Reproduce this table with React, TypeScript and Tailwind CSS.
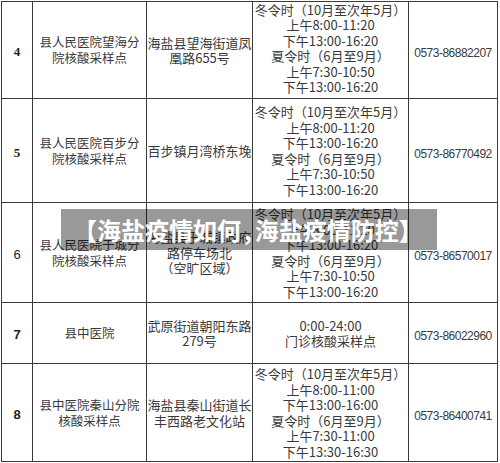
import React from "react";

const CJK = { fontFamily: '"Noto Sans CJK SC", "Noto Sans", sans-serif' };

type Row = {
  no: string;
  noClass: string;
  name: string[];
  addr: string[];
  time: string[];
  phone: string;
  timePad?: string;
};

const WINTER1 = [
  "冬令时（10月至次年5月）",
  "上午8:00-11:20",
  "下午13:00-16:20",
  "夏令时（6月至9月）",
  "上午7:30-10:50",
  "下午13:00-16:20",
];

const rows: Row[] = [
  {
    no: "4",
    noClass: "font-bold font-['Liberation_Serif',serif]",
    name: ["县人民医院望海分", "院核酸采样点"],
    addr: ["海盐县望海街道凤", "凰路655号"],
    time: WINTER1,
    phone: "0573-86882207",
    timePad: "pb-[4px]",
  },
  {
    no: "5",
    noClass: "font-bold font-['Liberation_Serif',serif]",
    name: ["县人民医院百步分", "院核酸采样点"],
    addr: ["百步镇月湾桥东堍"],
    time: WINTER1,
    phone: "0573-86770492",
  },
  {
    no: "6",
    noClass: "font-normal font-['Liberation_Sans',sans-serif]",
    name: ["县人民医院于城分", "院核酸采样点"],
    addr: ["海盐县于城镇政府", "路停车场北", "（空旷区域）"],
    time: WINTER1,
    phone: "0573-86570017",
  },
  {
    no: "7",
    noClass: "font-bold font-['Liberation_Sans',sans-serif]",
    name: ["县中医院"],
    addr: ["武原街道朝阳东路", "279号"],
    time: ["0:00-24:00", "门诊核酸采样点"],
    phone: "0573-86022960",
  },
  {
    no: "8",
    noClass: "font-bold font-['Liberation_Sans',sans-serif]",
    name: ["县中医院秦山分院", "核酸采样点"],
    addr: ["海盐县秦山街道长", "丰西路老文化站"],
    time: [
      "冬令时（10月至次年5月）",
      "上午8:00-11:00",
      "下午13:00-16:00",
      "夏令时（6月至9月）",
      "上午7:30-11:00",
      "下午13:30-16:30",
    ],
    phone: "0573-86400741",
  },
];

const cell =
  "border-r border-b border-[#3a3a3a] flex flex-col items-center justify-center text-center overflow-hidden whitespace-nowrap";

export default function App() {
  return (
    <div className="relative w-[500px] h-[463px] bg-white overflow-hidden text-[#3a3a3a]">
      <div className="ml-px mt-px w-[497px] border-l border-t border-[#3a3a3a] grid grid-cols-[31px_114px_106px_156px_89px] grid-rows-[97px_104px_100px_61px_98px]">
        {rows.map((r) => (
          <React.Fragment key={r.no}>
            <div className={`${cell} pt-[3px]`}>
              <span className={`text-[13px] leading-none text-[#222] ${r.noClass}`}>{r.no}</span>
            </div>
            <div className={`${cell} text-[12.5px] leading-[16px]`} style={CJK}>
              {r.name.map((l) => (
                <div key={l}>{l}</div>
              ))}
            </div>
            <div className={`${cell} text-[13px] leading-[15.5px]`} style={CJK}>
              {r.addr.map((l) => (
                <div key={l}>{l}</div>
              ))}
            </div>
            <div className={`${cell} text-[13px] leading-[15.5px] ${r.timePad ?? ""}`} style={CJK}>
              {r.time.map((l, i) => (
                <div key={i}>{l}</div>
              ))}
            </div>
            <div className={`${cell} pt-[6px]`}>
              <span className="text-[12px] tracking-[-0.5px] font-['Liberation_Sans',sans-serif] leading-none">
                {r.phone}
              </span>
            </div>
          </React.Fragment>
        ))}
      </div>
      <div className="absolute left-[61px] top-[209px] w-[376px] h-[41px] bg-black/40 flex items-center pl-[12px]">
        <span className="text-white text-[24px] font-bold leading-none whitespace-nowrap" style={CJK}>
          【海盐疫情如何<span className="mx-[3px]">,</span>海盐疫情防控】
        </span>
      </div>
    </div>
  );
}
